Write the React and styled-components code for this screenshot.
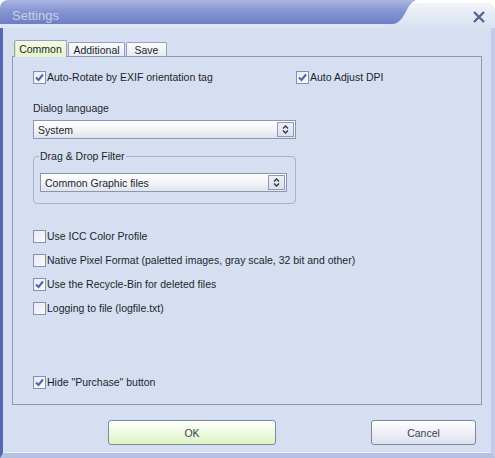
import React from 'react'
import styled, { createGlobalStyle } from 'styled-components'

const Global = createGlobalStyle`
  html, body { margin: 0; padding: 0; background: #ffffff; }
  body { font-family: "Liberation Sans", Arial, sans-serif; font-size: 10.5px; color: #1c1f2b; }
`

const Window = styled.div`
  width: 495px;
  height: 458px;
  display: flex;
  flex-direction: column;
`

const TitleBar = styled.div`
  height: 28px;
  display: flex;
  align-items: flex-start;
  background: linear-gradient(to bottom, transparent 23px, #dde4f3 23px);
`

const TitleTab = styled.div`
  position: relative;
  z-index: 1;
  flex: 0 0 424px;
  height: 24px;
  box-sizing: border-box;
  padding-left: 12px;
  padding-top: 7px;
  display: flex;
  align-items: center;
  border-top-left-radius: 8px;
  background: linear-gradient(to bottom, #a9b5e2 0%, #8796d2 45%, #6d7ec6 100%);
  clip-path: path('M0 0 H418 C 406 0, 406 24, 392 24 H0 Z');
  color: #c9cfe8;
  font-size: 13px;
`

const TitleRest = styled.div`
  flex: 1;
  margin-left: -40px;
  margin-top: 3px;
  height: 25px;
  border-top-right-radius: 8px;
  background: linear-gradient(to bottom, #f1f4fa, #d9e0f1);
  display: flex;
  justify-content: flex-end;
  align-items: center;
  padding-right: 9px;
`

const CloseIcon = styled.svg`
  width: 14px;
  height: 14px;
  margin-top: 2px;
`

const Frame = styled.div`
  flex: 1;
  display: flex;
  flex-direction: column;
  background: #d6dff2;
  border-left: 3px solid #5668b1;
  border-right: 4px solid #c2cce8;
  border-bottom: 5px solid #b4c1e3;
  box-shadow: inset 0 -1px 0 #eef2fa;
  padding: 12px 9px 0 9px;
`

const Tabs = styled.div`
  display: flex;
  align-items: flex-end;
  padding-left: 2px;
  height: 17px;
  position: relative;
  z-index: 1;
`

const Tab = styled.div`
  width: ${p => p.$width}px;
  height: ${p => (p.$active ? '17px' : '15px')};
  box-sizing: border-box;
  margin-right: 1px;
  display: flex;
  align-items: center;
  justify-content: center;
  border: 1px solid #95a0bc;
  border-bottom: ${p => (p.$active ? 'none' : '1px solid #8d99b5')};
  border-radius: 2px 2px 0 0;
  background: ${p =>
    p.$active
      ? 'linear-gradient(to bottom, #f3fbe3, #e4f4cc)'
      : 'linear-gradient(to bottom, #fbfcfe, #e8ebf3)'};
  box-shadow: ${p => (p.$active ? 'inset 1px 0 0 #d5f0a0' : 'none')};
  color: #1c1f2b;
`

const Panel = styled.div`
  height: 349px;
  box-sizing: border-box;
  margin-top: -1px;
  border: 1px solid #8d99b5;
  padding: 13px 20px 15px 20px;
  display: flex;
  flex-direction: column;
`

const TopRow = styled.div`
  display: grid;
  grid-template-columns: 263px auto;
`

const Check = styled.label`
  display: flex;
  align-items: center;
  height: 14px;
  gap: 1px;
  white-space: nowrap;
`

const Box = styled.span`
  width: 13px;
  height: 13px;
  box-sizing: border-box;
  border: 1px solid #8190b6;
  background: linear-gradient(to bottom right, #e6e9f2, #fafbfd);
  display: flex;
  align-items: center;
  justify-content: center;
`

const Label = styled.div`
  height: 14px;
  line-height: 14px;
  margin-top: 17px;
`

const Select = styled.div`
  height: 19px;
  width: ${p => p.$width}px;
  box-sizing: border-box;
  margin-top: ${p => p.$top || 0}px;
  border: 1px solid #8a96b4;
  background: linear-gradient(to bottom, #ffffff 0%, #f3f4f7 50%, #dfe3eb 100%);
  display: flex;
  align-items: center;
  justify-content: space-between;
  padding-left: 4px;
  padding-right: 1px;
`

const SelectButton = styled.span`
  width: 17px;
  height: 15px;
  box-sizing: border-box;
  border: 1px solid #8f9ab6;
  background: linear-gradient(to bottom, #eef0f6, #dde1ea);
  display: flex;
  align-items: center;
  justify-content: center;
`

const Group = styled.fieldset`
  margin: 10px 0 0 0;
  width: 263px;
  box-sizing: border-box;
  border: 1px solid #a9b4cd;
  border-radius: 4px;
  padding: 10px 8px 11px 6px;
`

const Legend = styled.legend`
  padding: 0 1px;
  margin-left: -1px;
  height: 14px;
  line-height: 14px;
`

const CheckList = styled.div`
  margin-top: 25px;
  display: flex;
  flex-direction: column;
  gap: 10px;
`

const Bottom = styled.div`
  margin-top: auto;
`

const Footer = styled.div`
  display: flex;
  justify-content: space-between;
  padding: 15px 6px 0 96px;
`

const Button = styled.div`
  width: ${p => p.$width}px;
  height: 25px;
  box-sizing: border-box;
  border: 1px solid #7d889f;
  border-radius: 3px;
  display: flex;
  align-items: center;
  justify-content: center;
  color: #3a4258;
  background: ${p =>
    p.$primary
      ? 'linear-gradient(to bottom, #ffffff 0%, #f2fbe6 40%, #dff4c4 100%)'
      : 'linear-gradient(to bottom, #ffffff 0%, #f1f3f8 40%, #dbe1ee 100%)'};
`

const Tick = () => (
  <svg width="9" height="9" viewBox="0 0 9 9">
    <path d="M1 4.5 L3.5 7 L8 1.5" fill="none" stroke="#5362a2" strokeWidth="2" />
  </svg>
)

const CheckItem = ({ checked, children }) => (
  <Check>
    <Box>{checked && <Tick />}</Box>
    <span>{children}</span>
  </Check>
)

const Arrows = () => (
  <svg width="7" height="9" viewBox="0 0 7 9">
    <path d="M1 3.5 L3.5 1 L6 3.5 M1 5.5 L3.5 8 L6 5.5" fill="none" stroke="#2d3550" strokeWidth="1.4" />
  </svg>
)

const Dropdown = ({ width, top, children }) => (
  <Select $width={width} $top={top}>
    <span>{children}</span>
    <SelectButton>
      <Arrows />
    </SelectButton>
  </Select>
)

export default function App() {
  return (
    <Window>
      <Global />
      <TitleBar>
        <TitleTab>Settings</TitleTab>
        <TitleRest>
          <CloseIcon viewBox="0 0 14 14">
            <path d="M2 2 L12 12 M12 2 L2 12" stroke="#59638f" strokeWidth="2.4" fill="none" />
          </CloseIcon>
        </TitleRest>
      </TitleBar>
      <Frame>
        <Tabs>
          <Tab $active $width={53}>Common</Tab>
          <Tab $width={57}>Additional</Tab>
          <Tab $width={41}>Save</Tab>
        </Tabs>
        <Panel>
          <TopRow>
            <CheckItem checked>Auto-Rotate by EXIF orientation tag</CheckItem>
            <CheckItem checked>Auto Adjust DPI</CheckItem>
          </TopRow>
          <Label>Dialog language</Label>
          <Dropdown width={263} top={5}>System</Dropdown>
          <Group>
            <Legend>Drag &amp; Drop Filter</Legend>
            <Dropdown width={247}>Common Graphic files</Dropdown>
          </Group>
          <CheckList>
            <CheckItem>Use ICC Color Profile</CheckItem>
            <CheckItem>Native Pixel Format (paletted images, gray scale, 32 bit and other)</CheckItem>
            <CheckItem checked>Use the Recycle-Bin for deleted files</CheckItem>
            <CheckItem>Logging to file (logfile.txt)</CheckItem>
          </CheckList>
          <Bottom>
            <CheckItem checked>Hide &quot;Purchase&quot; button</CheckItem>
          </Bottom>
        </Panel>
        <Footer>
          <Button $primary $width={168}>OK</Button>
          <Button $width={105}>Cancel</Button>
        </Footer>
      </Frame>
    </Window>
  )
}
